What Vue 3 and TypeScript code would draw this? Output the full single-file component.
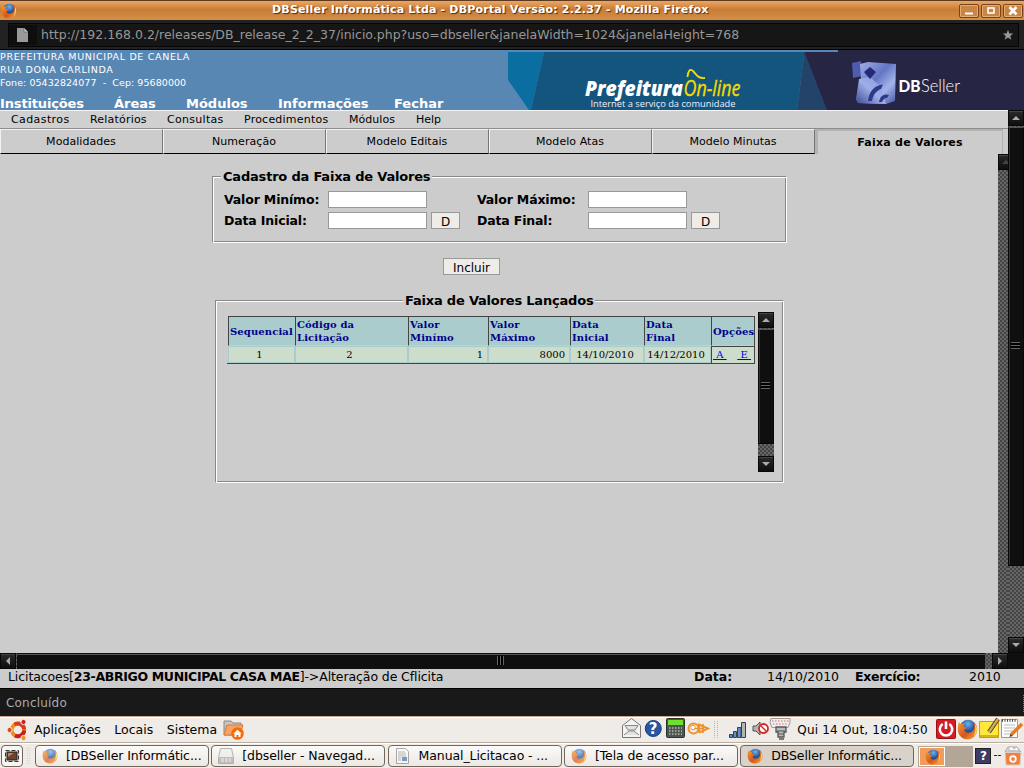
<script setup lang="ts">
interface Item { label: string; width: number; ls: number }

const areas: Item[] = [
  { label: 'Instituições', width: 114, ls: -0.15 },
  { label: 'Áreas', width: 72, ls: 0 },
  { label: 'Módulos', width: 92, ls: 0 },
  { label: 'Informações', width: 116, ls: 0 },
  { label: 'Fechar', width: 60, ls: 0 },
]
const menus: Item[] = [
  { label: 'Cadastros', width: 79, ls: 0.4 },
  { label: 'Relatórios', width: 77, ls: 0.2 },
  { label: 'Consultas', width: 77, ls: 0.3 },
  { label: 'Procedimentos', width: 105, ls: 0.22 },
  { label: 'Módulos', width: 67, ls: 0.05 },
  { label: 'Help', width: 40, ls: 0 },
]
const tabs: string[] = ['Modalidades', 'Numeração', 'Modelo Editais', 'Modelo Atas', 'Modelo Minutas']
const headers: string[][] = [['Sequencial'], ['Código da', 'Licitação'], ['Valor', 'Minímo'], ['Valor', 'Máximo'], ['Data', 'Inicial'], ['Data', 'Final'], ['Opções']]
const tasks: { icon: string; label: string; active?: boolean }[] = [
  { icon: 'fox', label: '[DBSeller Informátic...' },
  { icon: 'drive', label: '[dbseller - Navegad...' },
  { icon: 'doc', label: 'Manual_Licitacao - ...' },
  { icon: 'fox', label: '[Tela de acesso par...' },
  { icon: 'fox', label: 'DBSeller Informátic...', active: true },
]
</script>

<template>
  <div class="screen">
    <svg class="defs" width="0" height="0">
      <defs>
        <radialGradient id="globe" cx=".5" cy=".25" r=".8"><stop offset="0" stop-color="#6fb4e8" /><stop offset=".5" stop-color="#2458a6" /><stop offset="1" stop-color="#12285f" /></radialGradient>
        <linearGradient id="flame" x1="0" y1="0" x2="1" y2="1"><stop offset="0" stop-color="#f0a030" /><stop offset=".55" stop-color="#d9551a" /><stop offset="1" stop-color="#f3b03c" /></linearGradient>
        <symbol id="fox" viewBox="0 0 20 20">
          <circle cx="10.500" cy="8.600" r="7.800" fill="url(#globe)" />
          <path d="M2 3C1 5 .8 7 .8 10 .8 15.500 5 19.400 10 19.400 15.500 19.400 19.300 15 19.300 10 19.300 7 18 4 15.500 2.500 16.800 5 17 8 15.500 10.500 13.500 14 8.500 14 6.800 10.800 7.500 9.800 9 9.600 9.600 8.400L6.200 7.200C6 5.800 7 4.800 7.800 4.200 6 3.800 5 4.200 4 5Z" fill="url(#flame)" />
          <path d="M17 4.500C20 8 19.500 13 16 16.600 17.600 12.600 17.800 8.600 17 4.500Z" fill="#f8dc58" />
        </symbol>
      </defs>
    </svg>

    <header class="title">
      <svg class="tfox" width="16" height="16"><use href="#fox" /></svg>
      <b>DBSeller Informática Ltda - DBPortal Versão: 2.2.37 - Mozilla Firefox</b>
      <div class="wbtns">
        <i><svg width="18" height="12"><path d="M5 8.500h8" stroke="#fff" stroke-width="2" /></svg></i>
        <i><svg width="18" height="12"><rect x="6" y="3" width="6" height="5" fill="none" stroke="#fff" stroke-width="1.600" /></svg></i>
        <i><svg width="18" height="12"><path d="M5.500 2 12.500 9.500M12.500 2 5.500 9.500" stroke="#fff" stroke-width="2.600" /></svg></i>
      </div>
    </header>

    <div class="urlbar">
      <div class="field">
        <span class="page"><svg width="13" height="16"><path d="M1 1h7l4 4v10H1Z" fill="#999" /><path d="M8 1v4h4" fill="#ccc" stroke="#666" stroke-width=".7" /></svg></span>
        <span class="url">http://192.168.0.2/releases/DB_release_2_2_37/inicio.php?uso=dbseller&amp;janelaWidth=1024&amp;janelaHeight=768</span>
        <svg class="star" width="12" height="12"><path d="M6 .8 7.400 4.500 11.200 4.600 8.200 7 9.300 10.800 6 8.600 2.700 10.800 3.800 7 .8 4.600 4.600 4.500Z" fill="#999" /></svg>
      </div>
    </div>

    <div class="banner">
      <div class="org">
        <p class="o1">PREFEITURA MUNICIPAL DE CANELA</p>
        <p class="o2">RUA DONA CARLINDA</p>
        <p class="o3">Fone: 05432824077&nbsp; -&nbsp; Cep: 95680000</p>
        <nav><b v-for="a in areas" :key="a.label" :style="{ width: a.width + 'px', letterSpacing: a.ls + 'px' }">{{ a.label }}</b></nav>
      </div>
      <svg width="516" height="60" class="art">
        <defs>
          <linearGradient id="cube" x1="0" y1="0" x2="1" y2="1"><stop offset="0" stop-color="#a9b4ea" /><stop offset=".45" stop-color="#6476c4" /><stop offset=".7" stop-color="#a4b4ea" /><stop offset="1" stop-color="#4254a4" /></linearGradient>
          <linearGradient id="front" x1="1" y1="0" x2="0" y2="1"><stop offset="0" stop-color="#8696dc" /><stop offset=".5" stop-color="#9eaee8" /><stop offset="1" stop-color="#3c4a92" /></linearGradient>
        </defs>
        <path d="M330 0H516V60H300L296 2H330Z" fill="#262544" />
        <path d="M0 2h36L23 60h-2L0 30Z" fill="#0a6fa0" />
        <path d="M36 2H296.500L289 60H23Z" fill="#14557d" />
        <path d="M296.500 2 319 60H289Z" fill="#24436a" />
        <text x="77" y="46" class="pref" textLength="98" lengthAdjust="spacingAndGlyphs">Prefeitura</text>
        <text x="175.500" y="46" class="online" textLength="57" lengthAdjust="spacingAndGlyphs">On-line</text>
        <path d="M179.500 27C180 21 182 18 185 21 188 24 190 29 197 28" fill="none" stroke="#f7dc00" stroke-width="1.800" />
        <text x="82.500" y="56.500" class="slogan" textLength="145" lengthAdjust="spacingAndGlyphs">Internet a serviço da comunidade</text>
        <path d="M344 13 353 11 354 26 345 28Z" fill="#4d5cae" />
        <path d="M352 14 360 12 388 14 387 51 378 54 350 53 348 49 353 30Z" fill="url(#cube)" />
        <path d="M351 29 362 27 372 36 378 54 350 53 348 49Z" fill="url(#front)" />
        <path d="M362 17 368 22 362 29 356 22Z" fill="#242a78" />
        <path d="M360 51C361 41 367 35 375 34.500L373 39C368 41 365 45 364 51Z" fill="#2c3a88" />
        <path d="M371 52C372 46 376 43 381 45L379 48C376 48 375 50 374 52Z" fill="#2c3a88" />
        <text x="390.500" y="42" class="db" textLength="22" lengthAdjust="spacingAndGlyphs">DB</text>
        <text x="413" y="42" class="seller" textLength="39" lengthAdjust="spacingAndGlyphs">Seller</text>
      </svg>
    </div>

    <div class="work">
      <div class="main">
        <nav class="menubar"><span v-for="m in menus" :key="m.label" :style="{ width: m.width + 'px', letterSpacing: m.ls + 'px' }">{{ m.label }}</span></nav>
        <div class="tabs">
          <span v-for="t in tabs" :key="t" class="tab">{{ t }}</span>
          <b class="tab on">Faixa de Valores</b>
        </div>
        <div class="frame">
          <div class="content">
            <section class="group g1">
              <h2>Cadastro da Faixa de Valores</h2>
              <div class="form">
                <b>Valor Minímo:</b><input type="text"><span /><b>Valor Máximo:</b><input type="text"><span />
                <b>Data Inicial:</b><input type="text"><button>D</button><b>Data Final:</b><input type="text"><button>D</button>
              </div>
            </section>
            <button class="add">Incluir</button>
            <section class="group g2">
              <h2>Faixa de Valores Lançados</h2>
              <div class="list">
                <div class="table">
                  <div v-for="(h, i) in headers" :key="i" class="th"><div><div v-for="l in h" :key="l">{{ l }}</div></div></div>
                  <div class="td c">1</div><div class="td c k">2</div><div class="td r">1</div><div class="td r">8000</div>
                  <div class="td c">14/10/2010</div><div class="td c d2">14/12/2010</div>
                  <div class="td op"><u>&nbsp;A&nbsp;</u><u>&nbsp;E&nbsp;</u></div>
                </div>
                <div class="vs vs-in">
                  <i class="sb"><svg width="16" height="16"><path d="M4 10 8 6 12 10Z" fill="#aaa" /></svg></i>
                  <i class="thumb"><em /></i>
                  <i class="sb"><svg width="16" height="16"><path d="M4 6 8 10 12 6Z" fill="#aaa" /></svg></i>
                </div>
              </div>
            </section>
          </div>
          <div class="vs clip"><i class="sb"><svg width="16" height="16"><path d="M4 10 8 6 12 10Z" fill="#444" /></svg></i></div>
        </div>
      </div>
      <div class="vs outer">
        <i class="sb"><svg width="16" height="16"><path d="M4 10 8 6 12 10Z" fill="#aaa" /></svg></i>
        <i class="thumb"><em /></i>
        <i class="sb"><svg width="16" height="16"><path d="M4 6 8 10 12 6Z" fill="#aaa" /></svg></i>
      </div>
    </div>
    <div class="hs">
      <i class="sb"><svg width="16" height="16"><path d="M10 4 6 8 10 12Z" fill="#aaa" /></svg></i>
      <i class="hthumb"><em /></i>
      <i class="sb last"><svg width="16" height="16"><path d="M6 4 10 8 6 12Z" fill="#aaa" /></svg></i>
    </div>

    <div class="info">
      <span class="crumb">Licitacoes[<b>23-ABRIGO MUNICIPAL CASA MAE</b>]-&gt;Alteração de Cflicita</span>
      <b class="i1">Data:</b><span class="i2">14/10/2010</span><b class="i3">Exercício:</b><span class="i4">2010</span>
    </div>
    <div class="ffstatus"><span>Concluído</span><i /></div>

    <div class="panel">
      <svg class="ubuntu" width="22" height="22">
        <circle cx="11" cy="11" r="6.300" fill="none" stroke="#f08a1c" stroke-width="3.800" />
        <path d="M7.500 5.600A6.300 6.300 0 0 1 17.200 10.500" fill="none" stroke="#dc3c18" stroke-width="3.800" />
        <path d="M17.200 11.500A6.300 6.300 0 0 1 8 16.500" fill="none" stroke="#c8201c" stroke-width="3.800" />
        <g stroke="#efebe7" stroke-width="1"><circle cx="2.600" cy="11" r="2.600" fill="#e0481c" /><circle cx="16.500" cy="3" r="2.600" fill="#cc2020" /><circle cx="16.500" cy="19" r="2.600" fill="#f09020" /></g>
      </svg>
      <span class="p1">Aplicações</span><span class="p2">Locais</span><span class="p3">Sistema</span>
      <svg class="home" width="22" height="22">
        <path d="M1 2h7l2 2h8v12H1Z" fill="#c9c3bb" stroke="#888" /><path d="M4 6h16l-3 10H1Z" fill="#f7a368" stroke="#d97c3a" />
        <circle cx="14.500" cy="14.500" r="6.300" fill="#f36c0a" /><path d="M10.300 14.800 14.500 10.800l4.200 4H17.500V18h-2v-2h-2v2h-2v-3.200Z" fill="#fff" />
      </svg>
      <svg class="tray" width="172" height="26">
        <path d="M2.500 8.500 11.500 1.500 20.500 8.500V20.500H2.500Z" fill="#f4f4f2" stroke="#777" /><path d="M5 8.500h13l-3 4.500H8ZM4 18l5-4h5l5 4" fill="#e2e2e0" stroke="#888" />
        <circle cx="33.300" cy="11.500" r="8" fill="#2857a4" stroke="#173e7c" />
        <text x="28.800" y="17" class="q">?</text>
        <rect x="46.500" y="1.500" width="18" height="19" rx="1" fill="#4c5650" stroke="#2c332c" /><rect x="48" y="3" width="15" height="5" fill="#70e030" />
        <path d="M49 11h13M49 14h13M49 17h13" stroke="#b4bcb0" stroke-width="1.500" stroke-dasharray="1.500 1.500" />
        <path d="M79 15.500V7.500L88 11.500 79 15.500" fill="none" stroke="#f0922c" stroke-width="2" /><g fill="none" stroke="#f0922c" stroke-width="2"><circle cx="73.500" cy="11.500" r="5" /><path d="M74 11.500H84M83 7V16" stroke-width="1.700" /></g>
        <circle cx="73" cy="10.500" r="2.200" fill="#fff" stroke="#f0922c" />
        <path d="M94.500 4v18M97.500 4v18" stroke="#bbb5ae" stroke-width="1" stroke-dasharray="1 1" />
        <g stroke="#3c4148"><path d="M109.500 20.500v-3h3v3ZM113.500 20.500v-6h3v6Z" fill="#5c90d4" /><path d="M117.500 20.500v-10h3.500v10Z" fill="#5c90d4" /><path d="M121.500 20.500V5.500h4v15Z" fill="#b4b4b4" /></g>
        <path d="M133 9h3l4-4v13l-4-4h-3Z" fill="#b4b4b4" stroke="#555" /><circle cx="143.500" cy="11.500" r="4.500" fill="#fff" stroke="#d42424" stroke-width="1.800" /><path d="M140.500 8.500 146.500 14.500" stroke="#d42424" stroke-width="1.500" />
        <path d="M151 1.500h19v4l-2 5h-16l-2-5Z" fill="#eee" stroke="#999" /><path d="M152 4h17M153 7h15" stroke="#d66" stroke-dasharray="1.500 1.500" />
        <path d="M156 10h10v5h-2v5h-6v-5h-2ZM159 22h5" fill="#bbb" stroke="#555" stroke-width="1.300" /><path d="M157 14h8M158 17h6" stroke="#555" />
      </svg>
      <span class="clock">Qui 14 Out, 18:04:50</span>
      <svg class="launch" width="88" height="26">
        <rect x=".5" y="2.500" width="19" height="19" rx="1" fill="#d41c24" stroke="#a01018" /><path d="M6.700 7A6.200 6.200 0 1 0 13.300 7M10 4.500V12" fill="none" stroke="#fff" stroke-width="2.600" />
        <svg x="21" y="2" width="21" height="21"><use href="#fox" /></svg>
        <path d="M43.500 4.500h19v16h-19Z" fill="#ffe83c" stroke="#c8a000" /><path d="M44 18h18v2H44Z" fill="#d9b410" /><path d="M53 15 62 2" stroke="#3c3c3c" stroke-width="4.200" /><path d="M53 15 62 2" stroke="#d8a84c" stroke-width="2.500" />
        <path d="M65.500 2.500h16v18h-16Z" fill="#fcfcfa" stroke="#999" /><path d="M66 3.500h15" stroke="#444" stroke-width="2.500" stroke-dasharray="1 1.500" /><path d="M68 8h11M68 11h11M68 14h9M68 17h7" stroke="#bbb" /><path d="M75 18 86 7" stroke="#f07818" stroke-width="3.500" /><path d="m73.500 20 1-3 2 2Z" fill="#333" />
      </svg>
    </div>

    <div class="panel two">
      <span class="desk"><svg width="16" height="16"><rect x="1.500" y="2.500" width="13" height="11" fill="#efe8e0" stroke="#333" stroke-dasharray="4 2" /><rect x="3" y="4" width="10" height="8" fill="#70402c" stroke="#222" /><path d="M4 5h6L4 9Z" fill="#b58465" /></svg></span>
      <span class="grip" />
      <span v-for="(t, i) in tasks" :key="i" class="task" :class="{ active: t.active }">
        <svg width="18" height="18" :class="{ dim: !t.active }">
          <use v-if="t.icon === 'fox'" href="#fox" width="16" height="16" x="1" y="1" />
          <g v-else-if="t.icon === 'drive'"><path d="M3.500 1.500h11l2 9v6h-15v-6Z" fill="#eee" stroke="#999" /><path d="M2 10h14v6H2Z" fill="#aaa" /><path d="M4 12h10M4 14h10" stroke="#eee" stroke-dasharray="3 1" /></g>
          <g v-else><path d="M2.500 1.500h9l3 3v12h-12Z" fill="#fafafa" stroke="#888" /><path d="M4 5h7M4 7h8M4 9h8M4 11h3M4 13h3" stroke="#999" /><path d="M8 10h5v4H8Z" fill="#4478bc" /></g>
        </svg>
        <span class="tl">{{ t.label }}</span>
      </span>
      <span class="ws"><i><svg width="16" height="16"><use href="#fox" /></svg></i></span>
      <span class="help">?</span><span class="dash">--</span>
      <svg class="trash" width="18" height="22"><path d="M1 7 4 2h9l4 5Z" fill="#ddd" stroke="#aaa" /><path d="M4 5 7 1l3 3 3-2 2 4Z" fill="#fff" stroke="#bbb" /><path d="M1 7.500h16L16 20H2Z" fill="#f2803c" stroke="#d8cfc6" /><circle cx="9" cy="14" r="2.800" fill="none" stroke="#fff" stroke-width="1.800" /></svg>
    </div>
  </div>
</template>

<style>
html, body { margin: 0; background: #ccc; overflow: hidden; }
</style>

<style scoped>
* { box-sizing: border-box; }
.screen { width: 1024px; height: 768px; display: flex; flex-direction: column; font-family: "DejaVu Sans", sans-serif; color: #000; background: #ccc; white-space: nowrap; overflow: hidden; }
.screen > * { flex: none; }
svg { display: block; flex: none; }
.defs { position: absolute; }
i, em { font-style: normal; display: block; flex: none; }
p, h2 { margin: 0; }
.title { height: 20px; display: flex; align-items: center; border-top: 1px solid #5c3a20; background: linear-gradient(#eba765, #c97c35 45%, #d39048); }
.tfox { margin-left: 1px; }
.title b { margin-left: 255px; font-size: 11px; line-height: 17px; height: 19px; color: #fff; text-shadow: 1px 1px 1px #4d2c10; letter-spacing: .18px; width: 437px; }
.wbtns { display: flex; gap: 2px; margin-left: 250px; }
.wbtns i { width: 20px; height: 14px; border: 1px solid #7a4418; border-radius: 2px; box-shadow: inset 0 0 0 1px #e4ad74; background: #c98545; }
.urlbar { height: 30px; background: #222; border-bottom: 1px solid #000; padding: 3px 5px 3px 8px; }
.field { height: 24px; border: 1px solid #060606; background: #161616; display: flex; align-items: center; }
.page { width: 28px; height: 20px; background: #0e0e0e; padding: 2px 7px; }
.url { margin-left: 4px; font-size: 12.5px; line-height: 20px; margin-top: -1px; color: #969696; }
.star { margin-left: auto; margin-right: 4px; }
.banner { height: 60px; display: flex; background: #5987b4; color: #fff; }
.org { width: 508px; }
.org p { font-size: 9.5px; line-height: 13px; }
.org .o1 { letter-spacing: .66px; }
.org .o2 { letter-spacing: .6px; }
.org .o3 { letter-spacing: .06px; }
.org nav { display: flex; margin-top: 7px; font-size: 13px; line-height: 16px; }
.org nav b { display: block; flex: none; }
.pref { font: italic 800 21px "Open Sans", sans-serif; fill: #fff; }
.online { font: italic 21px "Open Sans", sans-serif; fill: #f7dc00; stroke: #f7dc00; stroke-width: .3; }
.slogan { font: 500 9.5px "Open Sans", sans-serif; fill: #eef; }
.db { font: 900 17.5px Lato, sans-serif; fill: #fff; }
.seller { font: 300 17.5px Lato, sans-serif; fill: #fff; }
.work { height: 543px; display: flex; }
.main { width: 1008px; display: flex; flex-direction: column; }
.menubar { height: 19px; border-top: 1px solid #f4f4f4; border-bottom: 1px solid #8c8c8c; background: #d0d0d0; padding-left: 11px; display: flex; font-size: 11px; line-height: 17px; }
.menubar span { display: block; flex: none; }
.tabs { height: 25px; display: flex; font-size: 11px; }
.tab { width: 163px; border: 1px solid #f2f2f2; border-right-color: #777; border-bottom-color: #000; text-align: center; line-height: 23px; padding-right: 1px; letter-spacing: .05px; }
.tab.on { width: 188px; border: solid #b2b2b2; border-width: 2px 1px 0 3px; letter-spacing: .25px; padding-right: 0; }
.frame { height: 499px; display: flex; }
.content { width: 998px; height: 499px; display: flex; flex-direction: column; }
.group { border: 1px solid; border-color: #888 #fff #fff #888; box-shadow: inset 1px 1px #fff, inset -1px -1px #888; flex: none; }
.group h2 { font-size: 13px; line-height: 18px; height: 16px; background: #ccc; margin-top: -9px; width: max-content; padding: 0 2px; letter-spacing: -.2px; }
.g1 { margin: 22px 0 0 212px; width: 575px; height: 67px; }
.g1 h2 { margin-left: 8px; }
.form { display: grid; grid-template-columns: 104px 99px 50px 111px 99px 33px; grid-auto-rows: 17px; row-gap: 4px; margin: 7px 0 0 11px; font-size: 12.5px; line-height: 17px; letter-spacing: -.16px; }
.form button { margin-left: 4px; width: 29px; }
input { width: 99px; height: 17px; padding: 0; border: 1px solid #999; background: #fff; }
button { height: 17px; padding: 1px 0 0; border: 1px solid #999; background: #efebe7; font: 12px/16px "DejaVu Sans", sans-serif; color: #000; }
.add { margin: 15px 0 0 443px; width: 57px; flex: none; }
.g2 { margin: 25px 0 0 215px; width: 569px; height: 183px; }
.g2 h2 { margin-left: 187px; }
.list { display: flex; margin: 4px 0 0 11px; }
.table { margin-top: 4px; width: 528px; height: 48px; display: grid; grid-template-columns: 67px 113px 80px 82px 74px 67px 43px; grid-template-rows: 30px 17px; padding-left: 1px; border-right: 1px solid #444; border-bottom: 1px solid #444; font-family: "DejaVu Serif", serif; font-size: 10px; }
.th { background: #acc; border: 1px solid #444; border-right: 0; border-bottom: 1px solid #ccc; color: #00008b; font-weight: bold; line-height: 13px; padding-left: 1px; display: flex; align-items: center; letter-spacing: .12px; }
.td { background: #cdc; border: 1px solid #acc; line-height: 15px; }
.c { text-align: center; padding-right: 4px; }
.d2 { padding-right: 3px; }
.r { text-align: right; padding-right: 4px; }
.op { display: flex; justify-content: space-between; border: 1px solid #444; border-width: 1px 0 0 1px; color: #00e; padding: 0 3px 0 1px; }
.vs, .hs { background-color: #444; background-image: conic-gradient(#666 25%, #444 0 50%, #666 0 75%, #444 0); background-size: 4px 4px; }
.vs { width: 16px; display: flex; flex-direction: column; justify-content: space-between; flex: none; }
.sb { width: 16px; height: 16px; background: linear-gradient(#2c2c2c, #0c0c0c); box-shadow: inset 0 0 0 1px #080808, inset 1px 2px #444; }
.thumb { background: #0f0f0f; border: 1px solid #080808; border-top: 1px solid #555; box-shadow: inset 1px 0 #333; display: flex; align-items: center; justify-content: center; }
.thumb em { width: 9px; height: 7px; background: repeating-linear-gradient(#666 0 1px, #000 1px 3px); }
.vs-in { height: 160px; margin-left: 3px; }
.vs-in .thumb { height: 115px; margin-bottom: 12px; margin-top: 1px; padding: 0 2px 2px 0; }
.clip { width: 10px; overflow: hidden; }
.outer { height: 543px; }
.outer .thumb { height: 439px; margin-bottom: 71px; margin-top: 1px; padding: 0 2px 2px 0; }
.hs { height: 16px; display: flex; }
.hthumb { width: 968px; margin-left: 1px; background: #0f0f0f; border-top: 1px solid #111; box-shadow: inset 0 1px #555; display: flex; align-items: center; justify-content: center; padding: 0 2px 2px 0; }
.hthumb em { width: 7px; height: 9px; background: repeating-linear-gradient(90deg, #666 0 1px, #000 1px 3px); }
.last { margin-left: 7px; }
.hs::after { content: ""; flex: 1; background: #0f0f0f; }
.info { height: 19px; display: flex; font-size: 12.5px; line-height: 16px; padding-left: 8px; }
.crumb { width: 686px; letter-spacing: -.1px; }
.crumb b { letter-spacing: -.34px; }
.i1 { width: 73px; } .i2 { width: 88px; } .i3 { width: 114px; letter-spacing: -.3px; }
.ffstatus { height: 28px; background: #191919; border-top: 1px solid #000; color: #aaa; font-size: 12px; letter-spacing: .2px; line-height: 28px; padding-left: 6px; display: flex; justify-content: space-between; }
.ffstatus i { width: 1px; margin: 6px 0 4px; background: repeating-linear-gradient(#777 0 1px, #191919 1px 2px); }
.panel { height: 27px; background: #efebe7; border-top: 1px solid #c8a890; border-bottom: 1px solid #b8ada0; display: flex; font-size: 12.5px; line-height: 26px; box-shadow: inset 0 1px #fff; }
.ubuntu { margin: 2px 0 0 7px; }
.p1 { margin-left: 5px; width: 81px; } .p2 { width: 53px; } .p3 { width: 57px; }
.home { margin-top: 2px; }
.tray { margin-left: 375px; }
.clock { width: 140px; margin-left: 5px; font-size: 12px; letter-spacing: .2px; }
.two { height: 25px; border: 0; padding-left: 1px; line-height: 23px; }
.desk { width: 22px; height: 22px; border: 1px solid #70665c; border-radius: 4px; padding: 2px; margin-top: 2px; background: #f8f6f3; flex: none; }
.grip { width: 5px; height: 18px; margin: 4px 4px 0 3px; background: radial-gradient(circle, #bbb 35%, transparent 40%); background-size: 2.5px 2.500px; flex: none; }
.task { width: 174px; height: 22px; border: 1px solid #70665c; border-radius: 4px; margin: 2px 2.300px 0 0; background: linear-gradient(#fbfaf8, #ece8e3); display: flex; padding: 1px 0 0 5px; flex: none; }
.task .tl { margin-left: 7px; line-height: 18px; letter-spacing: -.1px; }
.task.active { background: #d8d2ca; }
.dim { opacity: .7; }
.ws { width: 55px; height: 21px; margin: 3px 0 0 2px; background: #b3a697; padding: 1px; flex: none; }
.ws i { width: 26px; height: 19px; background: #f29b5c; border: 1px solid #fff; padding: 1px 5px; }
.help { width: 16px; height: 16px; margin: 5px 0 0 2px; background: #3c3c64; color: #fff; border: 1px solid #222; font: bold 12px/14px "DejaVu Sans", sans-serif; text-align: center; flex: none; }
.dash { width: 10px; margin-left: 2px; font-size: 11px; }
.trash { margin: 2px 0 0 1px; }
.q { font: bold 15px "DejaVu Sans", sans-serif; fill: #fff; }
</style>
